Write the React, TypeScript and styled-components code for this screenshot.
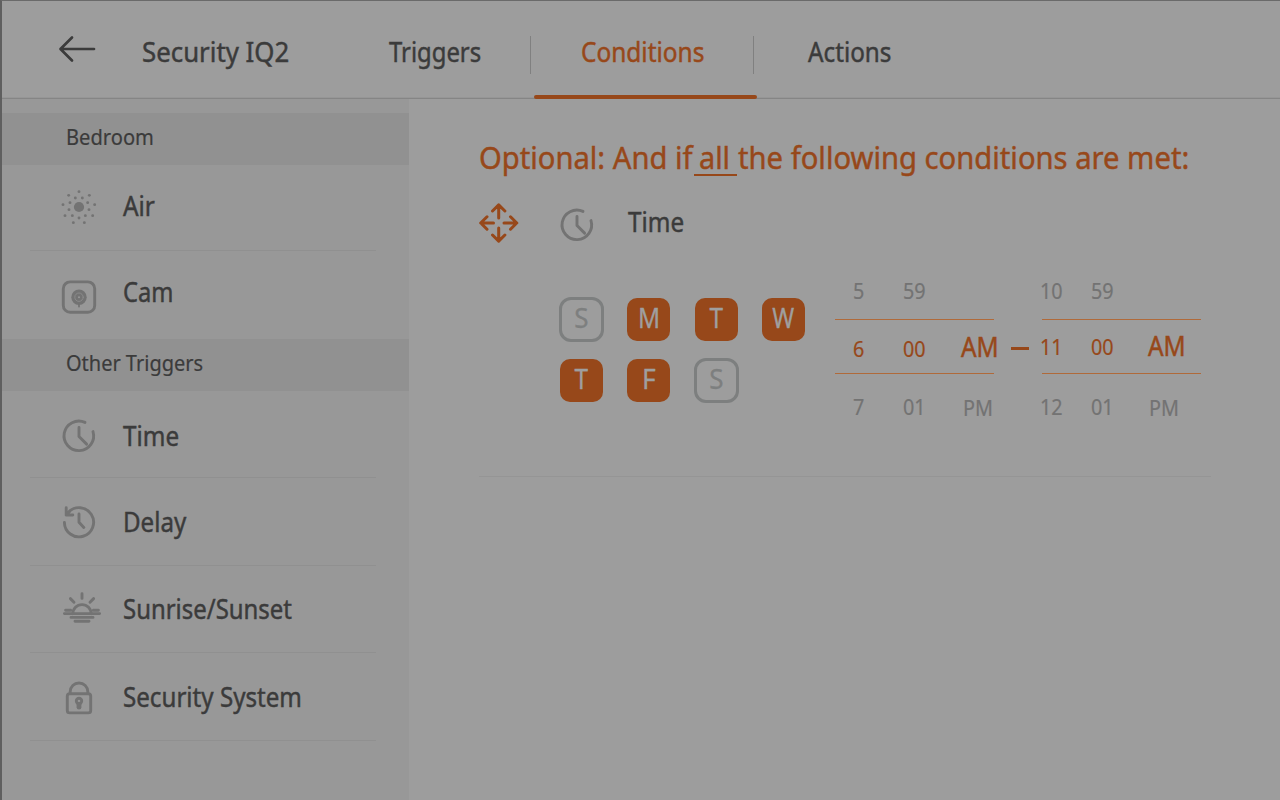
import React from "react";
import styled, { createGlobalStyle } from "styled-components";

const ink = "#3b3b3b";
const orange = "#97481a";
const grey = "#737373";

const GlobalStyle = createGlobalStyle`
  * { box-sizing: border-box; }
  body { margin: 0; background: #9d9d9d; font-family: "Noto Sans", "Open Sans", sans-serif; }
`;

const Screen = styled.div`
  width: 1280px;
  height: 800px;
  overflow: hidden;
  display: flex;
  flex-direction: column;
  background: #9d9d9d;
  border-left: 2px solid #5f5f5f;
  border-top: 1px solid #6a6a6a;
  color: ${ink};
`;

const Label = styled.span<{ $size?: number; $fit?: number; $color?: string; $thin?: boolean }>`
  display: block;
  white-space: nowrap;
  line-height: 30px;
  font-size: ${(p) => p.$size ?? 26.5}px;
  color: ${(p) => p.$color ?? "inherit"};
  transform: scaleX(${(p) => p.$fit ?? 0.915});
  transform-origin: left center;
  -webkit-text-stroke: ${(p) => (p.$thin ? 0.2 : 0.45)}px currentColor;
`;

const Header = styled.header`
  height: 98px;
  flex: none;
  display: flex;
  border-bottom: 1px solid #858585;
  box-shadow: inset 0 -1px 0 #969696;
`;
const BackButton = styled.div`
  width: 140px;
  padding: 33px 0 0 54px;
  line-height: 0;
`;
const ScreenTitle = styled.div`
  width: 196px;
  padding-top: 35px;
`;
const Tab = styled.div<{ $width: number; $inset: number; $divided?: boolean }>`
  width: ${(p) => p.$width}px;
  height: 38px;
  margin-top: 35px;
  padding: 1px 0 0 ${(p) => p.$inset}px;
  border-right: ${(p) => (p.$divided ? "1px solid #808080" : "none")};
`;
const ActiveBar = styled.div`
  width: 223px;
  height: 4px;
  margin: 28px 0 0 -47px;
  border-radius: 2px;
  background: ${orange};
  position: relative;
`;

const Body = styled.div`
  flex: 1;
  display: flex;
  min-height: 0;
`;
const Sidebar = styled.aside`
  width: 407px;
  flex: none;
  padding-top: 14px;
  background: #989898;
`;
const GroupTitle = styled.div`
  height: 52px;
  padding: 8px 0 0 64px;
  background: #919191;
`;
const Group = styled.div`
  padding: 0 33px 0 28px;
`;
const Item = styled.div<{ $height: number; $top: number; $last?: boolean }>`
  height: ${(p) => p.$height}px;
  padding-top: ${(p) => p.$top}px;
  display: flex;
  border-bottom: ${(p) => (p.$last ? "none" : "1px solid #909090")};
`;
const IconCell = styled.div<{ $drop: number }>`
  width: 92.5px;
  flex: none;
  padding-left: 29px;
  margin-top: ${(p) => p.$drop}px;
  line-height: 0;
`;

const Main = styled.main`
  flex: 1;
  min-width: 0;
  padding: 43px 69px 0 70px;
`;
const Heading = styled.div`
  display: flex;
  height: 34px;
  color: ${orange};
`;
const Lead = styled.div`
  width: 214.5px;
  flex: none;
`;
const Underlined = styled.div`
  width: 43.5px;
  flex: none;
  height: 34px;
  padding-left: 5px;
  border-bottom: 2px solid ${orange};
`;
const Rest = styled.div`
  width: 450px;
  flex: none;
  padding-left: 1px;
`;
const ConditionHead = styled.div`
  display: flex;
  height: 50px;
  margin-top: 23px;
`;
const MoveCell = styled.div`
  width: 78px;
  margin-top: 4px;
  line-height: 0;
`;
const ClockCell = styled.div`
  width: 71px;
  margin-top: 5.5px;
  line-height: 0;
`;
const NameCell = styled.div`
  padding-top: 8px;
`;
const Editor = styled.div`
  height: 228px;
  display: flex;
  border-bottom: 1px solid #959595;
`;
const Days = styled.div`
  width: 278px;
  flex: none;
  margin: 47.5px 0 0 78px;
  padding-left: 2px;
  display: grid;
  grid-template-columns: repeat(4, 67.3px);
  grid-auto-rows: 61.3px;
  align-content: start;
`;
const DaySlot = styled.div`
  width: 45px;
  height: 45px;
  display: flex;
  align-items: center;
  justify-content: center;
`;
const Day = styled.div<{ $on: boolean }>`
  width: ${(p) => (p.$on ? 43 : 45)}px;
  height: ${(p) => (p.$on ? 43 : 45)}px;
  flex: none;
  border-radius: ${(p) => (p.$on ? 10 : 12)}px;
  border: ${(p) => (p.$on ? "none" : "3px solid #7d7f7f")};
  background: ${(p) => (p.$on ? orange : "transparent")};
  color: ${(p) => (p.$on ? "#9f9f9f" : "#7d7f7f")};
  display: flex;
  align-items: center;
  justify-content: center;
  padding-bottom: 2px;
`;
const DayLetter = styled.span<{ $fit: number }>`
  font-size: 26.5px;
  line-height: 30px;
  transform: scaleX(${(p) => p.$fit});
  -webkit-text-stroke: 0.3px currentColor;
`;

const Picker = styled.div`
  width: 159px;
  flex: none;
  padding-top: 14px;
`;
const PickerRow = styled.div<{ $current?: boolean }>`
  height: ${(p) => (p.$current ? 55 : 56)}px;
  display: flex;
  box-shadow: ${(p) => (p.$current ? "inset 0 1px 0 #b06a3a, inset 0 -1px 0 #b06a3a" : "none")};
`;
const Value = styled.div<{ $width: number; $top: number; $inset: number }>`
  width: ${(p) => p.$width}px;
  flex: none;
  padding-top: ${(p) => p.$top}px;

  > span {
    margin-left: ${(p) => p.$inset}px;
  }
`;
const Dash = styled.div`
  width: 18px;
  height: 2.5px;
  flex: none;
  margin: 98px 13px 0 17px;
  background: ${orange};
`;

const Stroke = styled.svg.attrs({ fill: "none", strokeLinecap: "round", strokeLinejoin: "round" })<{
  $w?: number;
  $color?: string;
}>`
  overflow: visible;
  stroke: ${(p) => p.$color ?? grey};
  stroke-width: ${(p) => p.$w ?? 2.9};
`;

const airDots: [number, number][] = [
  [0, -46], [31, -35], [47, -7], [41, 26], [16, 47], [-17, 47], [-42, 26], [-48, -7], [-31, -35],
  [-11, -27], [10, -27], [26, -13], [30, 8], [19, 26], [0, 33], [-20, 26], [-30, 8], [-27, -13],
];
const AirIcon = () => (
  <svg width="40" height="40" fill={grey}>
    <circle cx="20" cy="20" r="5.1" />
    {airDots.map(([x, y]) => (
      <circle key={`${x},${y}`} cx={20 + x / 3} cy={20 + y / 3} r="1.45" />
    ))}
  </svg>
);
const CamIcon = () => (
  <Stroke width="40" height="40">
    <rect x="4.3" y="4.9" width="31.4" height="30.4" rx="6.8" />
    <circle cx="20" cy="20.2" r="7.7" fill={grey} stroke="none" />
    <circle cx="20" cy="20.2" r="4.2" stroke="#8c8c8c" strokeWidth="0.9" />
    <circle cx="20" cy="20.2" r="1" fill="#989898" stroke="none" />
    <path d="M20 27v2.6" strokeWidth="1.8" />
  </Stroke>
);
const ClockIcon = () => (
  <Stroke width="40" height="40">
    <path d="M26 6.4A14.8 14.8 0 1 0 34 15.6M20 11.5v9l7.6 7.6" />
  </Stroke>
);
const DelayIcon = () => (
  <Stroke width="40" height="40">
    <path d="M5.4 20.4A14.6 14.6 0 1 0 9.2 10.4M7.2 5.8v7.2h6.6M7.2 13l3.2-3.2M20 12v8.2l4.8 5.2" />
  </Stroke>
);
const SunIcon = () => (
  <Stroke width="40" height="40">
    <path d="M13.8 22.8A9.2 9.2 0 1 1 32.2 22.8M23 2.8v4.6M11.4 7.6l3.6 3.6M34.6 7.6L31 11.2M6.6 19.2h5M34.4 19.2h5M5.4 22.6h35.2M12 26.4h22M16 30.2h14" />
  </Stroke>
);
const LockIcon = () => (
  <Stroke width="40" height="40">
    <rect x="8.3" y="17.7" width="23.4" height="19.2" rx="2.4" />
    <path d="M11.2 17.4v-1.6a8.8 8.8 0 0 1 17.6 0v1.6" />
    <circle cx="20" cy="25" r="2.7" />
    <path d="M20 28.2v3" strokeWidth="4.8" />
  </Stroke>
);
const BackIcon = () => (
  <Stroke width="42" height="32" $w={2.7} $color={ink}>
    <path d="M5 15h33M16 3.5L4.5 15 16 26.5" />
  </Stroke>
);
const MoveIcon = () => (
  <Stroke width="40" height="40" $w={3} $color={orange}>
    <path d="M19.7 15V2.4M13.5 8L19.7 1.9 25.9 8M19.7 25v12.6M13.5 32L19.7 38.1 25.9 32M14.5 20H2M8 13.8L1.7 20 8 26.2M25 20h12.5M31.5 13.8L37.8 20 31.5 26.2" />
  </Stroke>
);

type Entry = { name: string; fit: number; height: number; top: number; drop: number; icon: React.ReactNode };
const bedroom: Entry[] = [
  { name: "Air", fit: 0.92, height: 86, top: 26, drop: -4, icon: <AirIcon /> },
  { name: "Cam", fit: 0.895, height: 88, top: 26, drop: -0.5, icon: <CamIcon /> },
];
const others: Entry[] = [
  { name: "Time", fit: 0.915, height: 87, top: 30, drop: -5, icon: <ClockIcon /> },
  { name: "Delay", fit: 0.91, height: 88, top: 29, drop: -5, icon: <DelayIcon /> },
  { name: "Sunrise/Sunset", fit: 0.903, height: 87, top: 27.5, drop: -2.5, icon: <SunIcon /> },
  { name: "Security System", fit: 0.911, height: 88, top: 29, drop: -6, icon: <LockIcon /> },
];
const days: [string, boolean, number][] = [
  ["S", false, 0.98], ["M", true, 0.92], ["T", true, 0.92], ["W", true, 0.89],
  ["T", true, 0.92], ["F", true, 1], ["S", false, 0.98],
];

type Cell = [text: string, top: number, inset: number];
const TimePicker = ({ rows, columns }: { rows: Cell[][]; columns: number[] }) => (
  <Picker>
    {rows.map((row, r) => (
      <PickerRow key={r} $current={r === 1}>
        {row.map(([text, top, inset], c) => (
          <Value key={c} $width={columns[c]} $top={top} $inset={inset}>
            <Label
              $size={text === "AM" ? 26.5 : 22}
              $fit={text === "AM" ? 0.92 : 0.9}
              $color={r === 1 ? orange : grey}
              $thin={text !== "AM"}
            >
              {text}
            </Label>
          </Value>
        ))}
      </PickerRow>
    ))}
  </Picker>
);

const from: Cell[][] = [
  [["5", 12, 18], ["59", 12, 8]],
  [["6", 14, 18], ["00", 14, 8], ["AM", 12.5, 6]],
  [["7", 17, 18], ["01", 17, 8], ["PM", 17.5, 7.5]],
];
const to: Cell[][] = [
  [["10", 12, -2.5], ["59", 12, 8]],
  [["11", 12, -2.5], ["00", 12, 7.5], ["AM", 11.5, 6]],
  [["12", 16.5, -2.5], ["01", 16.5, 8], ["PM", 17.5, 6.5]],
];

const Items = ({ list, openEnd }: { list: Entry[]; openEnd?: boolean }) => (
  <Group>
    {list.map((it, i) => (
      <Item key={it.name} $height={it.height} $top={it.top} $last={openEnd && i === list.length - 1}>
        <IconCell $drop={it.drop}>{it.icon}</IconCell>
        <Label $fit={it.fit}>{it.name}</Label>
      </Item>
    ))}
  </Group>
);

export default function App() {
  return (
    <>
      <GlobalStyle />
      <Screen>
        <Header>
          <BackButton><BackIcon /></BackButton>
          <ScreenTitle><Label $size={28} $fit={0.922}>Security IQ2</Label></ScreenTitle>
          <Tab $width={193} $inset={50.5} $divided><Label $fit={0.9}>Triggers</Label></Tab>
          <Tab $width={223} $inset={50} $divided>
            <Label $color={orange} $fit={0.922}>Conditions</Label>
            <ActiveBar />
          </Tab>
          <Tab $width={200} $inset={54}><Label>Actions</Label></Tab>
        </Header>
        <Body>
          <Sidebar>
            <GroupTitle><Label $size={22} $fit={0.915} $thin>Bedroom</Label></GroupTitle>
            <Items list={bedroom} openEnd />
            <GroupTitle><Label $size={22} $fit={0.908} $thin>Other Triggers</Label></GroupTitle>
            <Items list={others} />
          </Sidebar>
          <Main>
            <Heading>
              <Lead><Label $size={31} $fit={0.941}>Optional: And if</Label></Lead>
              <Underlined><Label $size={31} $fit={0.93}>all</Label></Underlined>
              <Rest><Label $size={31} $fit={0.942}>the following conditions are met:</Label></Rest>
            </Heading>
            <ConditionHead>
              <MoveCell><MoveIcon /></MoveCell>
              <ClockCell><ClockIcon /></ClockCell>
              <NameCell><Label>Time</Label></NameCell>
            </ConditionHead>
            <Editor>
              <Days>
                {days.map(([d, on, fit], i) => (
                  <DaySlot key={i}><Day $on={on}><DayLetter $fit={fit}>{d}</DayLetter></Day></DaySlot>
                ))}
              </Days>
              <TimePicker rows={from} columns={[60, 60, 39]} />
              <Dash />
              <TimePicker rows={to} columns={[41, 59, 39]} />
            </Editor>
          </Main>
        </Body>
      </Screen>
    </>
  );
}
